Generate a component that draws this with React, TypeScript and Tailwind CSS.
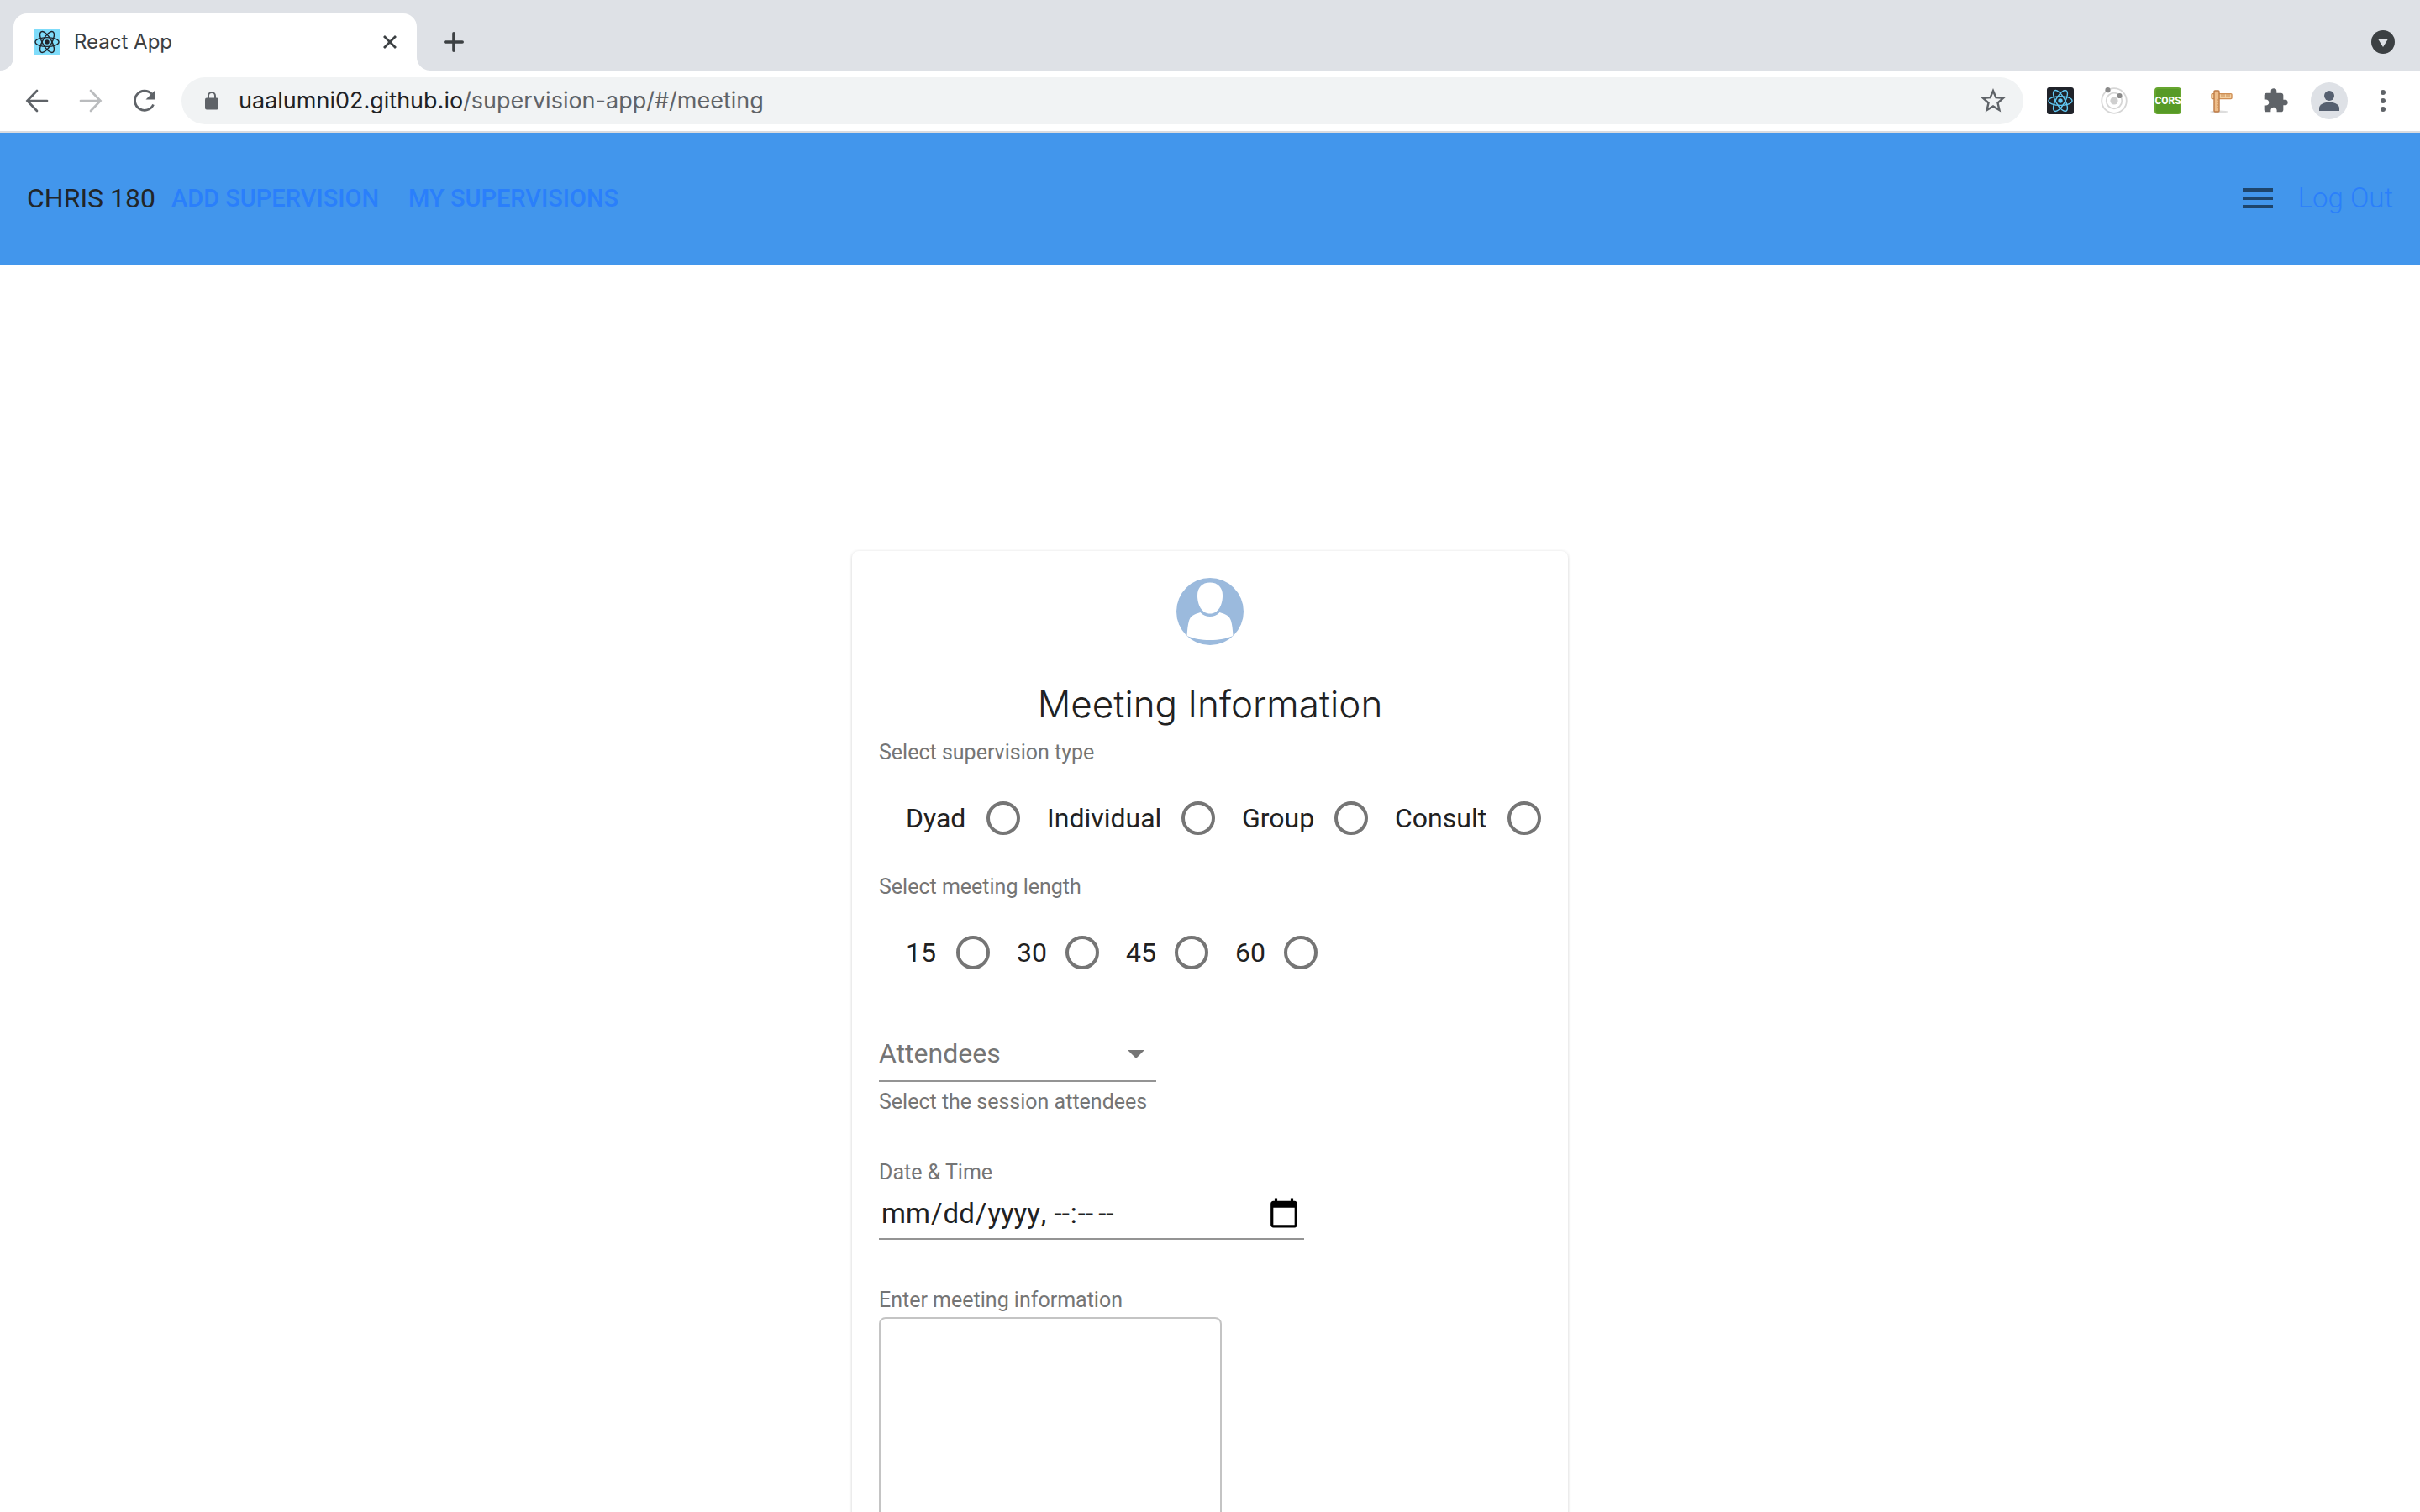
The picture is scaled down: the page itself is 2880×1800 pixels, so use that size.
import React from "react";

const ReactMark = ({ bg, fg, className }: { bg: string; fg: string; className: string }) => (
  <svg viewBox="0 0 32 32" className={className} aria-hidden="true">
    <rect width="32" height="32" rx="3" fill={bg} />
    <circle cx="16" cy="16" r="2.7" fill={fg} />
    <g fill="none" stroke={fg} strokeWidth="1.4">
      <ellipse cx="16" cy="16" rx="14" ry="5.4" />
      <ellipse cx="16" cy="16" rx="14" ry="5.4" transform="rotate(60 16 16)" />
      <ellipse cx="16" cy="16" rx="14" ry="5.4" transform="rotate(120 16 16)" />
    </g>
  </svg>
);

const Extensions = () => (
  <>
    <button aria-label="React Developer Tools">
      <ReactMark bg="#20232a" fg="#61c9f5" className="size-8" />
    </button>
    <button aria-label="Orbit extension">
      <svg viewBox="0 0 32 32" className="size-8">
        <circle cx="16" cy="16" r="14.8" fill="none" stroke="#d6d6d6" strokeWidth="1.8" />
        <circle cx="16" cy="16" r="9.3" fill="none" stroke="#d6d6d6" strokeWidth="1.8" />
        <circle cx="16" cy="16" r="4.6" fill="#cfcfcf" />
        <circle cx="8.5" cy="3.2" r="3.1" fill="#8a8a8a" />
        <circle cx="22.5" cy="10" r="3.1" fill="#8a8a8a" />
      </svg>
    </button>
    <button
      aria-label="CORS extension"
      className="flex size-8 items-center justify-center rounded-sm border-2 border-[#66a52f] bg-[#579a27] text-[12px] font-bold text-white"
    >
      CORS
    </button>
    <button aria-label="Page ruler">
      <svg viewBox="0 0 32 32" className="size-8">
        <ellipse cx="13" cy="29" rx="11" ry="1.4" fill="#dddddd" />
        <rect x="4" y="7.6" width="24" height="6" rx="1" fill="#f3cfa0" stroke="#cf8f55" strokeWidth="1.4" />
        <rect x="7" y="4" width="6" height="25" rx="1" fill="#eebd8a" stroke="#bd7a45" strokeWidth="1.4" />
        <path d="M16 8v3M19 8v3M22 8v3M25 8v3M10 15h2.5M10 18h2.5M10 21h2.5M10 24h2.5" stroke="#c98d55" strokeWidth="1" />
      </svg>
    </button>
    <button aria-label="Extensions">
      <svg viewBox="0 0 24 24" className="size-8" fill="#5f6368">
        <path d="M20.5 11H19V7c0-1.100-.9-2-2-2h-4V3.500a2.500 2.500 0 0 0-5 0V5H4c-1.100 0-1.990.9-1.990 2v3.800H3.500c1.490 0 2.700 1.210 2.700 2.700s-1.210 2.700-2.700 2.700H2V20c0 1.100.9 2 2 2h3.800v-1.500c0-1.490 1.210-2.700 2.700-2.700s2.700 1.210 2.700 2.700V22H17c1.100 0 2-.9 2-2v-4h1.500a2.500 2.500 0 0 0 0-5z" />
      </svg>
    </button>
  </>
);

const BrowserTabs = () => (
  <div className="flex h-[84px] items-end bg-[#dee1e6] pr-[30px]">
    <svg viewBox="0 0 16 16" className="size-4" aria-hidden="true">
      <path d="M16 0v16H0A16 16 0 0 0 16 0z" fill="#fff" />
    </svg>
    <div className="flex h-[68px] w-[480px] items-center rounded-t-2xl bg-white px-6">
      <ReactMark bg="#7fdcfa" fg="#20232a" className="size-8" />
      <span className="ml-4 flex-1 font-['Inter',sans-serif] text-[24px] leading-8 text-[#3c4043]">React App</span>
      <button aria-label="Close tab">
        <svg viewBox="0 0 16 16" className="size-4" stroke="#3c4043" strokeWidth="2.8">
          <path d="M1 1l14 14M15 1L1 15" />
        </svg>
      </button>
    </div>
    <svg viewBox="0 0 16 16" className="size-4" aria-hidden="true">
      <path d="M0 0v16h16A16 16 0 0 1 0 0z" fill="#fff" />
    </svg>
    <div className="ml-4 flex h-[68px] flex-1 items-center justify-between">
      <button aria-label="New tab">
        <svg viewBox="0 0 24 24" className="size-6" stroke="#3c4043" strokeWidth="3.6" strokeLinecap="round">
          <path d="M12 1.800v20.400M1.800 12h20.400" />
        </svg>
      </button>
      <button aria-label="Search tabs">
        <svg viewBox="0 0 28 28" className="size-7">
          <circle cx="14" cy="14" r="14" fill="#3c4043" />
          <path d="M7.800 10h12.400L14 20z" fill="#dee1e6" />
        </svg>
      </button>
    </div>
  </div>
);

const BrowserToolbar = () => (
  <div className="flex h-[74px] items-center border-b-2 border-[#dadce0] bg-white pr-[30px]">
    <div className="flex w-[216px] items-center gap-9 pl-[30px]">
      <button aria-label="Back">
        <svg viewBox="0 0 28 28" className="size-7" fill="none" stroke="#5f6368" strokeWidth="2.7" strokeLinecap="round">
          <path d="M26 14H3M14 2L2.500 14L14 26" />
        </svg>
      </button>
      <button aria-label="Forward">
        <svg viewBox="0 0 28 28" className="size-7" fill="none" stroke="#babcbe" strokeWidth="2.7" strokeLinecap="round">
          <path d="M2 14h23M14 2l11.500 12L14 26" />
        </svg>
      </button>
      <button aria-label="Reload">
        <svg viewBox="0 0 28 28" className="size-7">
          <path d="M24.500 18.500A11.500 11.500 0 1 1 22.500 6" fill="none" stroke="#5f6368" strokeWidth="2.8" />
          <path d="M27 1v11.500H15.500z" fill="#5f6368" />
        </svg>
      </button>
    </div>
    <div className="flex h-14 flex-1 items-center rounded-full bg-[#f1f3f4] pr-[18px] pl-7">
      <svg viewBox="0 0 16 22" className="h-[22px] w-4" aria-hidden="true">
        <rect y="7.5" width="16" height="14" rx="2" fill="#5f6368" />
        <path d="M4 8V5a4 4 0 0 1 8 0v3" fill="none" stroke="#5f6368" strokeWidth="2" />
      </svg>
      <div className="ml-6 flex-1 font-['Inter',sans-serif] text-[27px] leading-8 text-[#5f6368]">
        <span className="text-[#202124]">uaalumni02.github.io</span>/supervision-app/#/meeting
      </div>
      <button aria-label="Bookmark this page">
        <svg viewBox="0 0 24 24" className="size-9" fill="#5f6368">
          <path d="M22 9.240l-7.190-.62L12 2 9.190 8.630 2 9.240l5.460 4.730L5.820 21 12 17.270 18.180 21l-1.630-7.030L22 9.240zM12 15.400l-3.760 2.270 1-4.280-3.320-2.880 4.380-.38L12 6.100l1.710 4.040 4.380.38-3.320 2.880 1 4.280L12 15.400z" />
        </svg>
      </button>
    </div>
    <div className="ml-7 flex items-center gap-8">
      <Extensions />
    </div>
    <button aria-label="Profile" className="ml-[26px]">
      <svg viewBox="0 0 44 44" className="size-11">
        <circle cx="22" cy="22" r="22" fill="#dee1e6" />
        <circle cx="22" cy="16" r="6" fill="#566070" />
        <path d="M10 34v-3.500c0-4.500 7.500-7 12-7s12 2.500 12 7V34z" fill="#566070" />
      </svg>
    </button>
    <button aria-label="Browser menu" className="ml-7">
      <svg viewBox="0 0 28 28" className="size-7" fill="#5f6368">
        <circle cx="14" cy="4" r="3" />
        <circle cx="14" cy="14" r="3" />
        <circle cx="14" cy="24" r="3" />
      </svg>
    </button>
  </div>
);

const AppHeader = () => (
  <header className="flex h-[158px] items-center justify-between bg-[#4296ec] px-8 pb-0.5">
    <nav className="flex items-center">
      <span className="w-[172px] text-[32px] leading-10 text-[#212529]">CHRIS 180</span>
      <a href="#/add" className="w-[282px] text-[29px] leading-10 font-medium text-[#2a7ffb]">ADD SUPERVISION</a>
      <a href="#/supervisions" className="text-[29px] leading-10 font-medium text-[#2a7ffb]">MY SUPERVISIONS</a>
    </nav>
    <div className="flex items-center gap-6">
      <button aria-label="Open menu">
        <svg viewBox="0 0 24 24" className="size-12" fill="#1e456c">
          <path d="M3 18h18v-2H3v2zm0-5h18v-2H3v2zm0-7v2h18V6H3z" />
        </svg>
      </button>
      <a href="#/logout" className="text-[33px] leading-10 font-light text-[#2a7ffb]">Log Out</a>
    </div>
  </header>
);

const Caption = "block text-[25px] leading-10 text-[#757575]";

const RadioGroup = ({ legend, name, options, columns }: { legend: string; name: string; options: string[]; columns: string }) => (
  <fieldset className="h-40">
    <legend className={Caption}>{legend}</legend>
    <div className={`mt-[38px] ml-8 grid ${columns}`}>
      {options.map((option) => (
        <label key={option} className="flex h-10 items-center justify-between pr-8 text-[32px] leading-10 text-[#212121]">
          {option}
          <input type="radio" name={name} value={option} className="size-10 appearance-none rounded-full border-4 border-[#757575] checked:bg-[#757575]" />
        </label>
      ))}
    </div>
  </fieldset>
);

const MeetingCard = () => (
  <form className="w-[852px] rounded-lg bg-white px-8 pt-8 pb-8 shadow-[0_1px_4px_rgba(0,0,0,0.18)]">
    <svg viewBox="0 0 80 80" className="mx-auto size-20" aria-hidden="true">
      <circle cx="40" cy="40" r="40" fill="#9bbadd" />
      <path d="M40 5.500c9.500 0 15 6 15 15.500C55 32 50 42.500 40 42.500S25 32 25 21C25 11.500 30.500 5.500 40 5.500z" fill="#fff" />
      <path d="M28.500 41c3 3.500 7 5 11.500 5s8.500-1.500 11.500-5c8 2.500 11.500 4 13.500 10 1.500 5 2 11 2.500 18-7 3-17 5-27.500 5s-20.500-2-27.500-5c.5-7 1-13 2.500-18 2-6 5.500-7.500 13.500-10z" fill="#fff" />
    </svg>
    <h1 className="mt-10 text-center font-['Inter',sans-serif] text-[44px] leading-[60px] font-light text-[#212121]">Meeting Information</h1>
    <div className="mt-2">
      <RadioGroup legend="Select supervision type" name="type" options={["Dyad", "Individual", "Group", "Consult"]} columns="grid-cols-[168px_232px_182px_206px] -mr-8" />
      <RadioGroup legend="Select meeting length" name="length" options={["15", "30", "45", "60"]} columns="grid-cols-[132px_130px_130px_130px]" />
    </div>
    <div className="mt-[38px] w-[330px]">
      <div className="flex items-center border-b-2 border-[#949494] pb-3">
        <select id="attendees" aria-label="Attendees" className="h-10 flex-1 appearance-none text-[32px] leading-10 text-[#757575]">
          <option>Attendees</option>
        </select>
        <svg viewBox="0 0 24 24" className="-my-1 size-12" fill="#757575" aria-hidden="true">
          <path d="M7 10l5 5 5-5z" />
        </svg>
      </div>
      <label htmlFor="attendees" className={`${Caption} mt-1 whitespace-nowrap`}>Select the session attendees</label>
    </div>
    <div className="mt-11 w-[506px]">
      <label htmlFor="date" className={Caption}>Date &amp; Time</label>
      <input
        id="date"
        type="datetime-local"
        className="block h-[60px] w-full border-b-2 border-[#949494] px-0.5 text-[33px] leading-10 text-[#212121] [&::-webkit-calendar-picker-indicator]:size-10"
      />
    </div>
    <div className="mt-[52px]">
      <label htmlFor="info" className={Caption}>Enter meeting information</label>
      <textarea id="info" className="block h-[400px] w-[408px] resize-none rounded-lg border-2 border-[#c4c4c4] p-4 text-[32px]" />
    </div>
  </form>
);

export default function App() {
  return (
    <div className="flex h-screen flex-col bg-white font-['Roboto',sans-serif]">
      <BrowserTabs />
      <BrowserToolbar />
      <div className="min-h-0 flex-1 overflow-hidden">
        <AppHeader />
        <main className="flex justify-center pt-[340px]">
          <MeetingCard />
        </main>
      </div>
    </div>
  );
}
